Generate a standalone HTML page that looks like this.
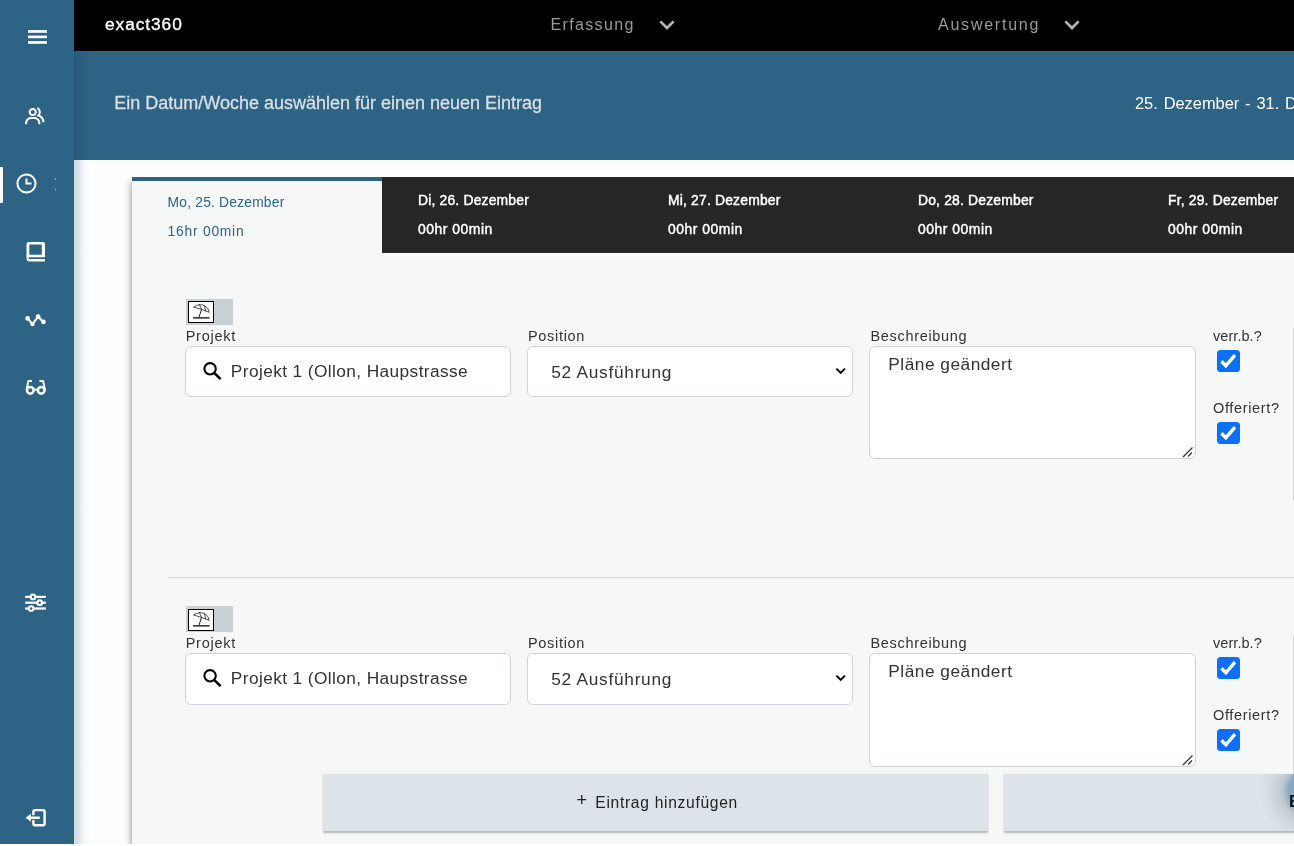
<!DOCTYPE html>
<html lang="de">
<head>
<meta charset="utf-8">
<title>exact360</title>
<style>
*{box-sizing:border-box;margin:0;padding:0}
html,body{width:1294px;height:846px;overflow:hidden;background:#fcfdfd;font-family:"Liberation Sans",sans-serif;color:#333}
#page{position:absolute;left:0;top:0;width:1294px;height:846px;overflow:hidden;will-change:transform}
.abs{position:absolute}
#side{left:0;top:0;width:74px;height:846px;background:#2d6485;z-index:5}
#side svg{position:absolute;display:block}
#side .act{position:absolute;left:0;top:167px;width:3px;height:36px;background:#fff}
#top{left:74px;top:0;width:1220px;height:51px;background:#000}
#brand{left:105px;top:12.5px;font-size:17.3px;line-height:22px;color:#fff;letter-spacing:.95px;white-space:nowrap;-webkit-text-stroke:.35px #fff}
.nav{color:#9a9a9a;font-size:16px;line-height:22px;white-space:nowrap}
#hdr{left:74px;top:51px;width:1220px;height:109px;background:#2d6485}
#hdrtxt{left:114.2px;top:92px;font-size:18px;line-height:22px;color:#dcdfe2;white-space:nowrap;-webkit-text-stroke:.3px #dcdfe2}
#hdrdate{left:1135px;top:92px;font-size:16.4px;word-spacing:1.3px;line-height:22px;color:#fff;white-space:nowrap}
#mainshadow{left:74px;top:160px;width:16px;height:686px;background:linear-gradient(90deg,#d2d8dc 0,#d9dee1 4px,#eceff0 7px,#f7f8f9 11px,#fcfdfd 16px)}
#hdrshadow{left:74px;top:51px;width:22px;height:109px;background:linear-gradient(90deg,rgba(20,40,60,.22) 0,rgba(20,40,60,.13) 4px,rgba(20,40,60,.05) 10px,rgba(20,40,60,0) 22px)}
#card{left:132px;top:177px;width:1180px;height:680px;background:#f6f8f8;box-shadow:-2px 5px 5px rgba(60,70,80,.38)}
#tabs{left:381px;top:177px;width:913px;height:77px;background:#242628;border-left:1px solid #fff;border-bottom:1px solid #fff}
.tab{top:177px;width:250px;height:76px;color:#fff;font-size:13.9px;font-weight:normal;-webkit-text-stroke:.45px #fff;white-space:nowrap}
.tab div{position:absolute;left:36px;line-height:18px}
.tab .l1{top:13.5px;letter-spacing:.18px}.tab .l2{top:42.5px;letter-spacing:.53px}
#tab0{left:132px;background:#f6f8f8;border-top:4px solid #2d6485;color:#2d6485;font-weight:normal;font-size:13.8px;-webkit-text-stroke:0}
#tab0 .l1{top:13px;left:35.6px;letter-spacing:.21px}#tab0 .l2{top:42px;left:35.6px;letter-spacing:.78px}
.lbl{font-size:14.5px;line-height:18px;color:#333;white-space:nowrap}
.inp{background:#fff;border:1px solid #ced4da;border-radius:6px}
.val{font-size:17.3px;line-height:24px;color:#333;white-space:nowrap}
.cb{width:22.5px;height:22px;background:#0b6ffb;border-radius:3.5px}
.cb svg{display:block}
.hr{left:168px;width:1126px;height:1px;background:#d9dddf}
.btn{top:774px;height:57px;background:#dde4e9;box-shadow:0 1.5px 2px rgba(0,0,0,.26);border-radius:1px}
</style>
</head>
<body>
<div id="page">
<div id="side" class="abs"><svg width="74" height="846" viewBox="0 0 74 846" fill="#fff" stroke="none">
<!-- menu -->
<rect x="28" y="30.1" width="19" height="2.7"/><rect x="28" y="35.6" width="19" height="2.6"/><rect x="28" y="41.1" width="19" height="2.7"/>
<!-- group -->
<g transform="translate(23.06,103.8) scale(1.02)">
<path d="M16.604 11.048a5.67 5.67 0 0 0 .751-3.44c-.179-1.784-1.175-3.361-2.803-4.44l-1.105 1.666c1.119.742 1.8 1.799 1.918 2.974a3.693 3.693 0 0 1-1.072 2.986l-1.192 1.192 1.618.475C18.951 13.701 19 17.957 19 18h2c0-1.789-.956-5.285-4.396-6.952z"/>
<path d="M9.5 12c2.206 0 4-1.794 4-4s-1.794-4-4-4-4 1.794-4 4 1.794 4 4 4zm0-6c1.103 0 2 .897 2 2s-.897 2-2 2-2-.897-2-2 .897-2 2-2zm1.500 7H8c-3.309 0-6 2.691-6 6v1h2v-1c0-2.206 1.794-4 4-4h3c2.206 0 4 1.794 4 4v1h2v-1c0-3.309-2.691-6-6-6z"/>
</g>
<!-- active marker -->
<rect x="0" y="167" width="3" height="36"/>
<!-- clock -->
<g transform="translate(14.5,171.6)">
<path d="M12 2C6.486 2 2 6.486 2 12s4.486 10 10 10 10-4.486 10-10S17.514 2 12 2zm0 18c-4.411 0-8-3.589-8-8s3.589-8 8-8 8 3.589 8 8-3.589 8-8 8z"/><path d="M13 7h-2v6h6v-2h-4z"/>
</g>
<rect x="55" y="178" width="1" height="2" opacity=".45"/><rect x="55" y="188.5" width="1" height="2" opacity=".45"/>
<!-- book -->
<path fill-rule="evenodd" d="M29 241.9H43A2 2 0 0 1 45 243.9V257.3H29.4C28.9 257.3 28.5 257.7 28.5 258.2S28.9 259.1 29.4 259.1H45V261.5H29.5C27.8 261.5 26.5 260.2 26.5 258.5V244.4A2.5 2.5 0 0 1 29 241.9ZM29.3 244.4V254.7H41.8V244.4Z"/>
<!-- pulse -->
<g stroke="#fff" stroke-width="2.1" fill="none" stroke-linecap="round" stroke-linejoin="round"><path d="M27.6 318.4L32.5 324.1L38.1 316.7L43.5 321.9"/></g>
<circle cx="27.6" cy="318.4" r="2.3"/><circle cx="32.5" cy="324.1" r="2.2"/><circle cx="38.1" cy="316.7" r="2.4"/><circle cx="43.5" cy="321.9" r="2.3"/>
<!-- glasses -->
<g stroke="#fff" stroke-width="2" fill="none" stroke-linejoin="round" stroke-linecap="butt">
<circle cx="30.3" cy="390.3" r="3.35" stroke-width="2.5"/><circle cx="41.2" cy="390.3" r="3.35" stroke-width="2.5"/>
<path d="M34 389.6H37.5"/>
<path d="M26.6 389.5L28.3 381.1H31.9"/><path d="M44.9 389.5L43.2 381.1H39.4"/>
</g>
<!-- slider -->
<g>
<rect x="25.2" y="595.8" width="20.8" height="2.2"/><rect x="25.2" y="601.6" width="20.8" height="2.2"/><rect x="25.2" y="607.4" width="20.8" height="2.2"/>
<g stroke="#fff" stroke-width="2.1" fill="#2d6485"><circle cx="33" cy="596.9" r="2.3"/><circle cx="39.7" cy="602.7" r="2.3"/><circle cx="31.1" cy="608.5" r="2.3"/></g>
</g>
<!-- logout -->
<g stroke="#fff" stroke-width="2.4" fill="none"><path d="M33.4 815.3V811.4A1.3 1.3 0 0 1 34.7 810.1H43.3A1.3 1.3 0 0 1 44.6 811.4V824A1.3 1.3 0 0 1 43.3 825.3H34.7A1.3 1.3 0 0 1 33.4 824V819.9"/></g>
<path d="M25.4 817.7L31 813.8V816.5H39.8V819H31V821.8Z"/>
</svg></div>
<div id="top" class="abs"></div>
<div id="brand" class="abs">exact360</div>
<div class="abs nav" style="left:550.4px;top:13.5px;letter-spacing:1.37px">Erfassung</div>
<div class="abs nav" style="left:938px;top:13.5px;letter-spacing:1.77px">Auswertung</div>
<svg class="abs" style="left:650.9px;top:8.2px" width="32" height="32" viewBox="0 0 24 24" fill="#b4b4b4"><path d="M16.293 9.293 12 13.586 7.707 9.293l-1.414 1.414L12 16.414l5.707-5.707z"/></svg><svg class="abs" style="left:1056.4px;top:8.2px" width="32" height="32" viewBox="0 0 24 24" fill="#b4b4b4"><path d="M16.293 9.293 12 13.586 7.707 9.293l-1.414 1.414L12 16.414l5.707-5.707z"/></svg><div id="hdr" class="abs"></div>
<div id="hdrshadow" class="abs"></div>
<div id="hdrtxt" class="abs">Ein Datum/Woche auswählen für einen neuen Eintrag</div>
<div id="hdrdate" class="abs">25. Dezember - 31. Dezember</div>
<div id="mainshadow" class="abs"></div>
<div id="card" class="abs"></div>
<div id="tabs" class="abs"></div>
<div id="tab0" class="abs tab"><div class="l1">Mo, 25. Dezember</div><div class="l2">16hr 00min</div></div>
<div class="abs tab" style="left:382px"><div class="l1">Di, 26. Dezember</div><div class="l2">00hr 00min</div></div>
<div class="abs tab" style="left:632px"><div class="l1">Mi, 27. Dezember</div><div class="l2">00hr 00min</div></div>
<div class="abs tab" style="left:882px"><div class="l1">Do, 28. Dezember</div><div class="l2">00hr 00min</div></div>
<div class="abs tab" style="left:1132px"><div class="l1">Fr, 29. Dezember</div><div class="l2">00hr 00min</div></div>

<div class="abs" style="left:186px;top:299px;width:47px;height:26px;background:#c9d1d6"></div>
<div class="abs" style="left:188px;top:301px;width:26px;height:22px;background:#fff;border:1px solid #000"></div>
<svg class="abs" style="left:188px;top:301px" width="26" height="22" viewBox="188 301 26 22" fill="none" stroke="#222" stroke-width=".8" stroke-linecap="round" stroke-linejoin="round">
<path d="M193.6 317.9H209" stroke-width="1.4" stroke="#000"/>
<path d="M199 317.2L201.5 309.5" stroke-width="1"/>
<path d="M193.9 306.8Q199 303.2 204.6 305.6Q208.8 308.2 209.2 312.3L201.5 309.4Z"/>
<path d="M199.4 304.5L201.5 309.4M204.6 305.6L205.6 311"/>
</svg>
<div class="abs lbl" style="left:185.7px;top:327px;letter-spacing:.73px">Projekt</div>
<div class="abs inp" style="left:185px;top:346px;width:326px;height:50.5px"></div>
<svg class="abs" style="left:202px;top:361px" width="21" height="20" viewBox="202 361 21 20" fill="none" stroke="#000"><circle cx="210.1" cy="368.8" r="5.7" stroke-width="2.1"/><path d="M214.4 373.1L220.6 379.1" stroke-width="2.6"/></svg>
<div class="abs val" style="left:230.8px;top:358.6px;letter-spacing:.4px">Projekt 1 (Ollon, Haupstrasse</div>
<div class="abs lbl" style="left:528px;top:327px;letter-spacing:.68px">Position</div>
<div class="abs inp" style="left:527px;top:346px;width:326px;height:50.5px"></div>
<div class="abs val" style="left:551.2px;top:360px;letter-spacing:.73px">52 Ausführung</div>
<svg class="abs" style="left:834px;top:366px" width="14" height="10" viewBox="834 366 14 10" fill="none" stroke="#000" stroke-width="2" stroke-linecap="butt" stroke-linejoin="miter"><path d="M836.4 368.6L840.7 372.9L845 368.6"/></svg>
<div class="abs lbl" style="left:870.5px;top:327px;letter-spacing:.68px">Beschreibung</div>
<div class="abs inp" style="left:869px;top:346px;width:326.5px;height:113px"></div>
<div class="abs val" style="left:888.3px;top:351.7px;letter-spacing:.5px">Pläne geändert</div>
<svg class="abs" style="left:1182px;top:445.5px" width="12" height="12" viewBox="0 0 12 12" fill="none" stroke="#333" stroke-width="1.3"><path d="M1 11L10.5 1.5M6 10.5L10 6.5"/></svg>
<div class="abs lbl" style="left:1213px;top:327px;letter-spacing:.06px">verr.b.?</div>
<div class="abs cb" style="left:1217px;top:350.3px"><svg width="22" height="22" viewBox="0 0 22 22" fill="none" stroke="#fff" stroke-width="3.4" stroke-linecap="butt" stroke-linejoin="miter"><path d="M4.4 11.2L8.9 15.7L18 5.2"/></svg></div>
<div class="abs lbl" style="left:1213px;top:399px;letter-spacing:.65px">Offeriert?</div>
<div class="abs cb" style="left:1217px;top:422.3px"><svg width="22" height="22" viewBox="0 0 22 22" fill="none" stroke="#fff" stroke-width="3.4" stroke-linecap="butt" stroke-linejoin="miter"><path d="M4.4 11.2L8.9 15.7L18 5.2"/></svg></div>
<div class="abs" style="left:1293px;top:328px;width:1px;height:172px;background:#cfd4d8"></div>

<div class="abs" style="left:186px;top:606px;width:47px;height:26px;background:#c9d1d6"></div>
<div class="abs" style="left:188px;top:609px;width:26px;height:22px;background:#fff;border:1px solid #000"></div>
<svg class="abs" style="left:188px;top:609px" width="26" height="22" viewBox="188 301 26 22" fill="none" stroke="#222" stroke-width=".8" stroke-linecap="round" stroke-linejoin="round">
<path d="M193.6 317.9H209" stroke-width="1.4" stroke="#000"/>
<path d="M199 317.2L201.5 309.5" stroke-width="1"/>
<path d="M193.9 306.8Q199 303.2 204.6 305.6Q208.8 308.2 209.2 312.3L201.5 309.4Z"/>
<path d="M199.4 304.5L201.5 309.4M204.6 305.6L205.6 311"/>
</svg>
<div class="abs lbl" style="left:185.7px;top:634px;letter-spacing:.73px">Projekt</div>
<div class="abs inp" style="left:185px;top:653px;width:326px;height:51.5px"></div>
<svg class="abs" style="left:202px;top:668px" width="21" height="20" viewBox="202 361 21 20" fill="none" stroke="#000"><circle cx="210.1" cy="368.8" r="5.7" stroke-width="2.1"/><path d="M214.4 373.1L220.6 379.1" stroke-width="2.6"/></svg>
<div class="abs val" style="left:230.8px;top:665.6px;letter-spacing:.4px">Projekt 1 (Ollon, Haupstrasse</div>
<div class="abs lbl" style="left:528px;top:634px;letter-spacing:.68px">Position</div>
<div class="abs inp" style="left:527px;top:653px;width:326px;height:51.5px"></div>
<div class="abs val" style="left:551.2px;top:667px;letter-spacing:.73px">52 Ausführung</div>
<svg class="abs" style="left:834px;top:673px" width="14" height="10" viewBox="834 366 14 10" fill="none" stroke="#000" stroke-width="2" stroke-linecap="butt" stroke-linejoin="miter"><path d="M836.4 368.6L840.7 372.9L845 368.6"/></svg>
<div class="abs lbl" style="left:870.5px;top:634px;letter-spacing:.68px">Beschreibung</div>
<div class="abs inp" style="left:869px;top:653px;width:326.5px;height:114px"></div>
<div class="abs val" style="left:888.3px;top:658.7px;letter-spacing:.5px">Pläne geändert</div>
<svg class="abs" style="left:1182px;top:753.5px" width="12" height="12" viewBox="0 0 12 12" fill="none" stroke="#333" stroke-width="1.3"><path d="M1 11L10.5 1.5M6 10.5L10 6.5"/></svg>
<div class="abs lbl" style="left:1213px;top:634px;letter-spacing:.06px">verr.b.?</div>
<div class="abs cb" style="left:1217px;top:657.3px"><svg width="22" height="22" viewBox="0 0 22 22" fill="none" stroke="#fff" stroke-width="3.4" stroke-linecap="butt" stroke-linejoin="miter"><path d="M4.4 11.2L8.9 15.7L18 5.2"/></svg></div>
<div class="abs lbl" style="left:1213px;top:706px;letter-spacing:.65px">Offeriert?</div>
<div class="abs cb" style="left:1217px;top:729.3px"><svg width="22" height="22" viewBox="0 0 22 22" fill="none" stroke="#fff" stroke-width="3.4" stroke-linecap="butt" stroke-linejoin="miter"><path d="M4.4 11.2L8.9 15.7L18 5.2"/></svg></div>
<div class="abs" style="left:1293px;top:635px;width:1px;height:172px;background:#cfd4d8"></div>

<div class="abs hr" style="top:577px"></div>
<div class="abs btn" style="left:323px;width:665px"></div>
<div class="abs btn" style="left:1004px;width:320px;background:radial-gradient(circle at 306px 17px,#86a6c2 0,#8aa9c4 21px,#a9bccb 25px,#c2cbd2 29px,#cdd4da 36px,#d8dfe4 44px,#dde4e9 52px)"></div>
<div class="abs" style="left:576.5px;top:790px;font-size:18px;line-height:20px;color:#222;white-space:nowrap">+</div><div class="abs" style="left:595.3px;top:793px;font-size:15.6px;line-height:20px;color:#222;white-space:nowrap;letter-spacing:.7px">Eintrag hinzufügen</div>
<div class="abs" style="left:1289px;top:790.5px;font-size:16.5px;line-height:20px;font-weight:bold;color:#111;white-space:nowrap">Eintrag speichern</div>
<div class="abs" style="left:0;top:844px;width:1294px;height:2px;background:#fff;z-index:9"></div>
</div>
</body>
</html>
